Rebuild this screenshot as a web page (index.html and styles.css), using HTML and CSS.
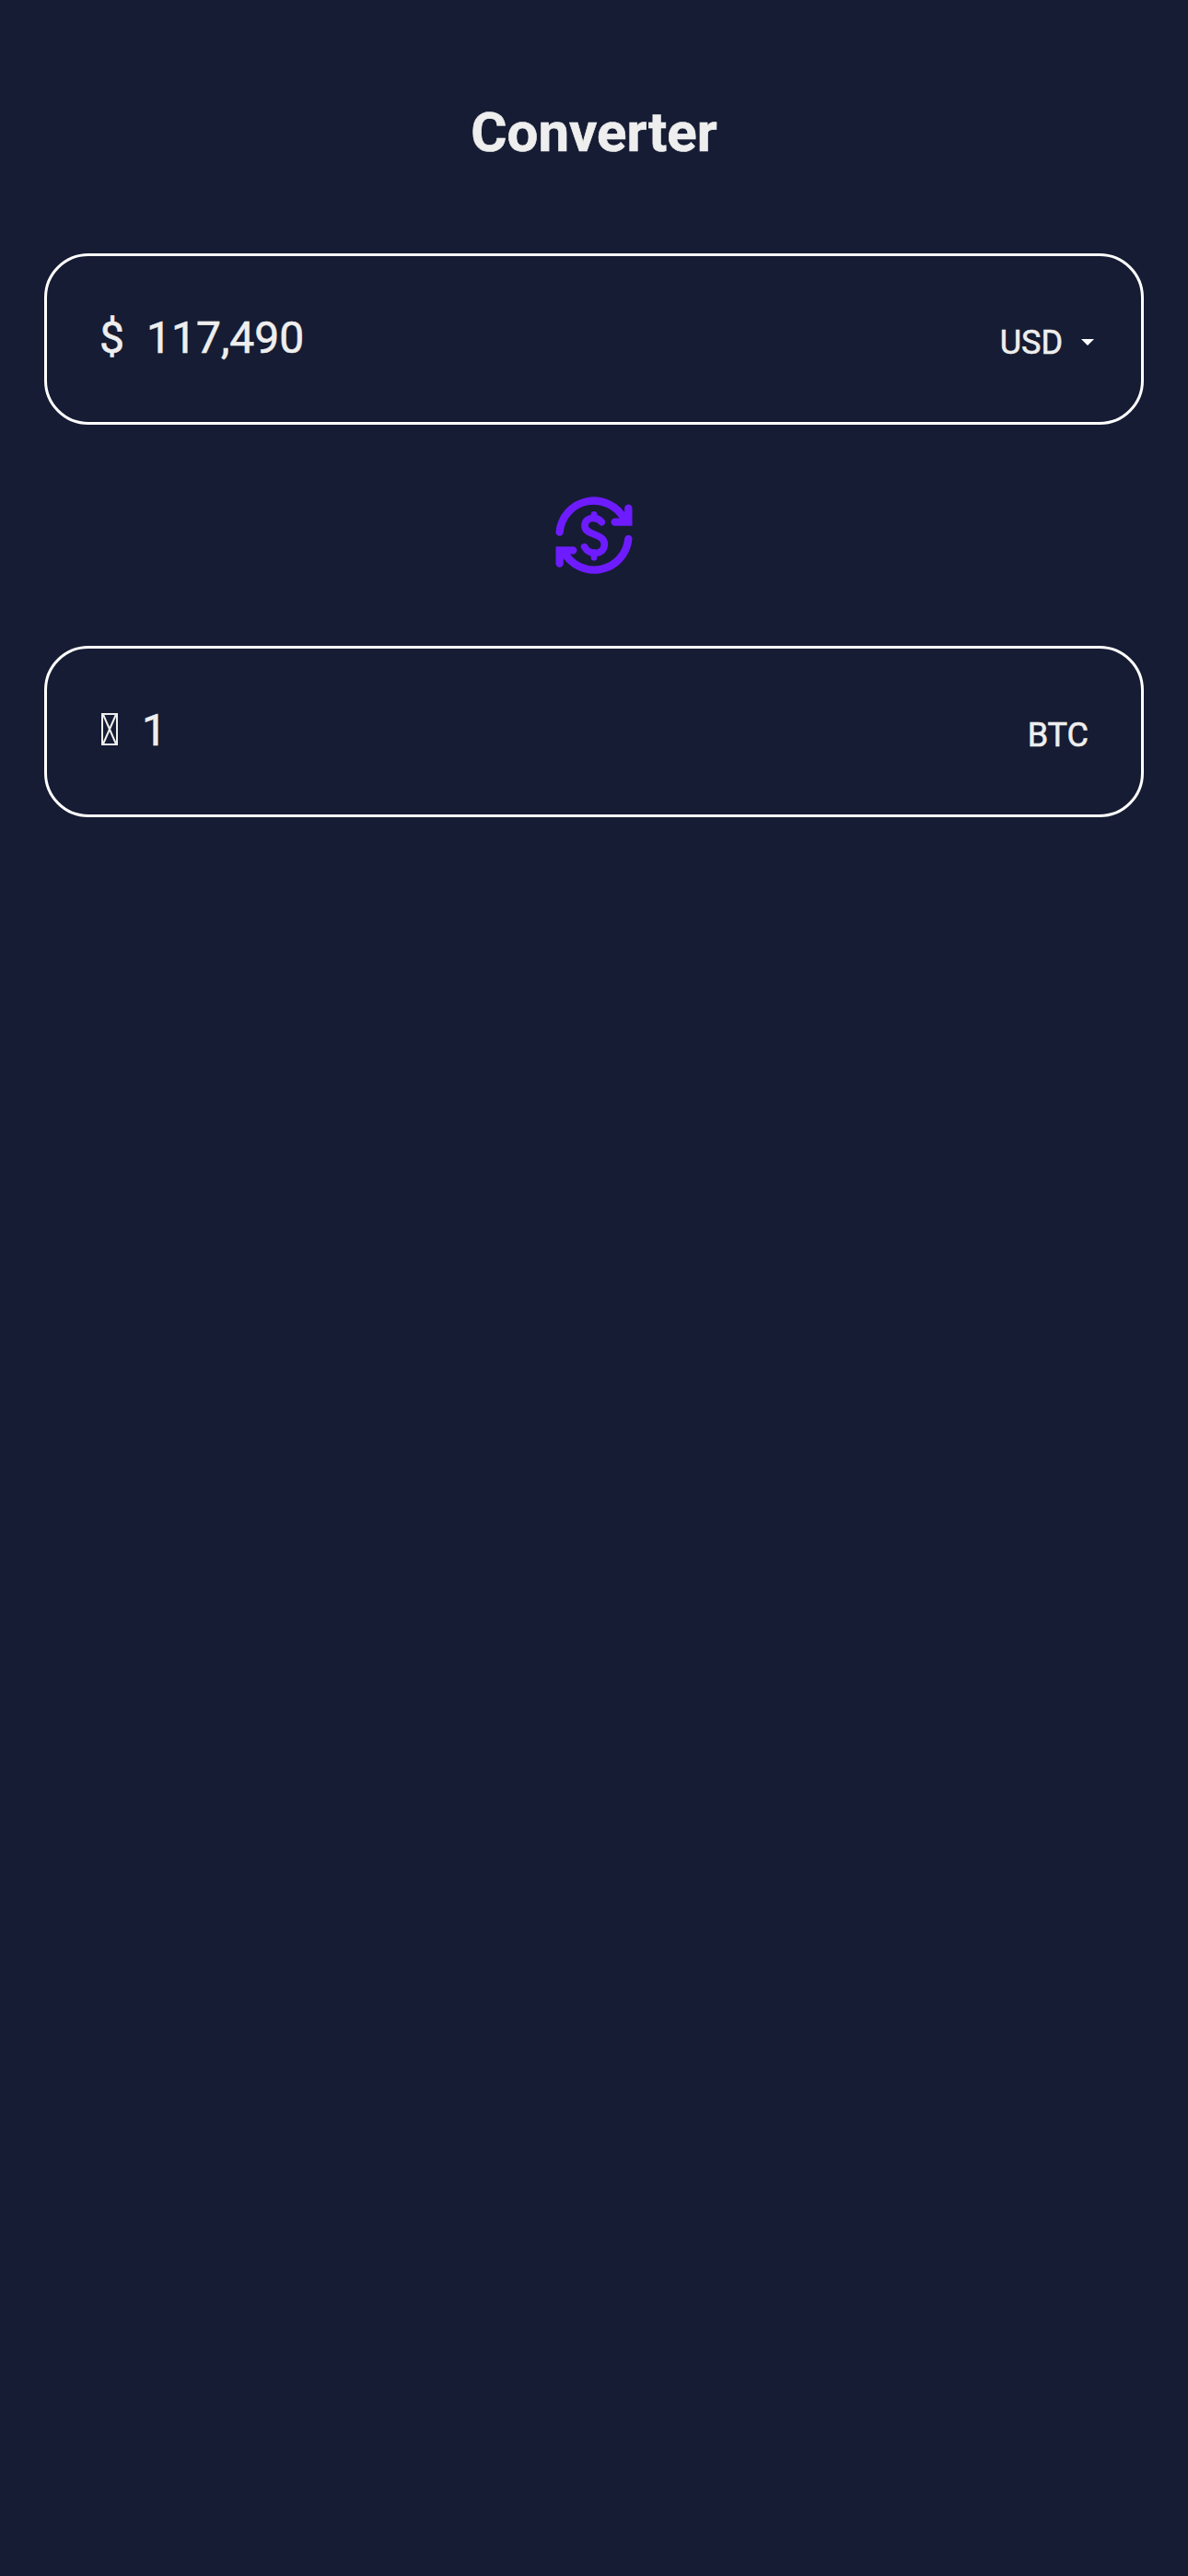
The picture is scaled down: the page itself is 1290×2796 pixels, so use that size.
FILE: index.html
```html
<!DOCTYPE html>
<html lang="en">
<head>
<meta charset="utf-8">
<title>Converter</title>
<link rel="stylesheet" href="styles.css">
</head>
<body>
<main class="converter">
  <h1 class="title">Converter</h1>
  <section class="field">
    <div class="amount"><span class="symbol">$</span><span>117,490</span></div>
    <div class="currency"><span>USD</span><svg class="caret" viewBox="0 0 14 7" aria-hidden="true"><path d="M0 0h14L7 7z"/></svg></div>
  </section>
  <svg class="swap" viewBox="0 0 252 252" role="img" aria-label="Swap currencies">
    <g fill="none" stroke="currentColor" stroke-width="25" stroke-linecap="round">
      <path d="M14 116A112 112 0 0 1 224 72"/>
      <path d="M238 38V83H194"/>
      <path d="M238 138A112 112 0 0 1 28 180"/>
      <path d="M14 218V175H58"/>
      <path stroke-width="20" d="M126 58V72M126 182V199"/>
      <path stroke-width="23" d="M151 83C135 63 96 66 96 95C96 128 160 118 160 155C160 190 112 194 95 164"/>
    </g>
  </svg>
  <section class="field">
    <div class="amount"><svg class="box-glyph" viewBox="0 0 18 35" role="img" aria-label="Bitcoin"><path d="M1 1H17V34H1ZM2 1.5L16 33.5M16 1.5L2 33.5"/></svg><span>1</span></div>
    <div class="currency code"><span>BTC</span></div>
  </section>
</main>
</body>
</html>
```
FILE: styles.css
```css
* { box-sizing: border-box; }
body {
  margin: 0;
  min-height: 100vh;
  background: #161c33;
  color: #eee;
  font-family: Roboto, sans-serif;
  -webkit-text-stroke: 0.6px #eee;
}
.converter {
  display: flex;
  flex-direction: column;
  align-items: center;
  padding: 108px 48px 0;
}
.title {
  margin: 0 0 96px;
  font-size: 60px;
  line-height: 71px;
  font-weight: 700;
}
.field {
  display: flex;
  justify-content: space-between;
  width: 100%;
  height: 186px;
  padding: 61px 51px 0 57px;
  border: 3px solid #fff;
  border-radius: 48px;
}
.amount {
  display: flex;
  font-size: 48px;
  line-height: 56px;
}
.symbol { margin-right: 24px; }
.currency {
  display: flex;
  align-items: flex-start;
  padding-top: 12px;
  font-size: 36px;
  line-height: 42px;
}
.code { padding-right: 6px; }
.caret {
  width: 14px;
  height: 7px;
  margin: 17px 0 0 20px;
  fill: #fff;
}
.swap {
  width: 84px;
  height: 84px;
  margin: 78px 0;
  color: #6e1cff;
}
.box-glyph {
  width: 18px;
  height: 35px;
  margin: 9px 26px 0 2px;
  fill: none;
  stroke: #eee;
  stroke-width: 2;
}
```
